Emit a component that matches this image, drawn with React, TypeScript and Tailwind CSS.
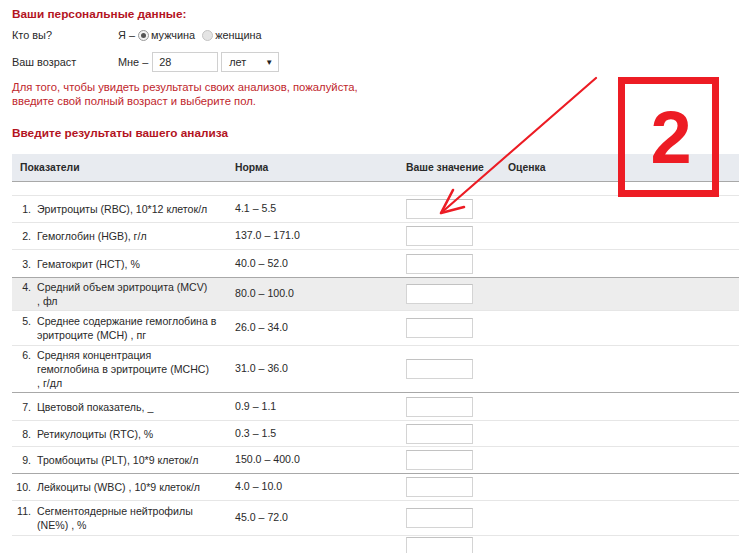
import React from "react";

type Row = {
  n: string;
  lines: string[];
  norm: string;
  h: string;
  dark?: boolean;
  gray?: boolean;
};

const rows: Row[] = [
  { n: "1.", lines: ["Эритроциты (RBC), 10*12 клеток/л"], norm: "4.1 – 5.5", h: "h-[27px]" },
  { n: "2.", lines: ["Гемоглобин (HGB), г/л"], norm: "137.0 – 171.0", h: "h-[27px]" },
  { n: "3.", lines: ["Гематокрит (HCT), %"], norm: "40.0 – 52.0", h: "h-[28px]", dark: true },
  { n: "4.", lines: ["Средний объем эритроцита (MCV)", ", фл"], norm: "80.0 – 100.0", h: "h-[33px]", gray: true },
  { n: "5.", lines: ["Среднее содержание гемоглобина в", "эритроците (MCH) , пг"], norm: "26.0 – 34.0", h: "h-[35px]" },
  {
    n: "6.",
    lines: ["Средняя концентрация", "гемоглобина в эритроците (MCHC)", ", г/дл"],
    norm: "31.0 – 36.0",
    h: "h-[47px]",
    dark: true,
  },
  { n: "7.", lines: ["Цветовой показатель, _"], norm: "0.9 – 1.1", h: "h-[28px]" },
  { n: "8.", lines: ["Ретикулоциты (RTC), %"], norm: "0.3 – 1.5", h: "h-[26px]" },
  { n: "9.", lines: ["Тромбоциты (PLT), 10*9 клеток/л"], norm: "150.0 – 400.0", h: "h-[27px]", dark: true },
  { n: "10.", lines: ["Лейкоциты (WBC) , 10*9 клеток/л"], norm: "4.0 – 10.0", h: "h-[27px]" },
  { n: "11.", lines: ["Сегментоядерные нейтрофилы", "(NE%) , %"], norm: "45.0 – 72.0", h: "h-[35px]" },
];

function Radio({ checked }: { checked?: boolean }) {
  return (
    <span
      className={
        checked
          ? "inline-flex items-center justify-center w-[11px] h-[11px] rounded-full border border-[#9a9a9a] bg-[#f3f3f3]"
          : "inline-flex w-[11px] h-[11px] rounded-full border border-[#c4c4c4] bg-[#e4e4e4]"
      }
    >
      {checked && <span className="w-[5px] h-[5px] rounded-full bg-[#555]" />}
    </span>
  );
}

function ValueBox() {
  return <div className="w-[67px] h-[20px] border border-[#d4d4d4] border-t-[#c2c2c2] bg-white" />;
}

function Annotation() {
  return (
    <svg className="absolute left-0 top-0 pointer-events-none" width="747" height="553" viewBox="0 0 747 553">
      <rect x="621.5" y="80.5" width="94" height="113" fill="none" stroke="#ed1c24" strokeWidth="7" />
      <text
        x="671"
        y="163"
        textAnchor="middle"
        fill="#ed1c24"
        fontFamily="'Liberation Sans', Arial, sans-serif"
        fontWeight="bold"
        fontSize="74"
      >
        2
      </text>
      <path d="M596 78 L441 213" stroke="#ec1c24" strokeWidth="2.2" fill="none" strokeLinecap="round" />
      <path d="M453 190 L441 213 L464 207" stroke="#ec1c24" strokeWidth="2.6" fill="none" strokeLinecap="round" strokeLinejoin="round" />
    </svg>
  );
}

export default function App() {
  return (
    <div className="relative w-[747px] h-[553px] overflow-hidden bg-white font-['Liberation_Sans',Arial,sans-serif] text-[10.6px] text-[#2a2a2a]">
      <div className="pl-3 pt-[6px]">
        <div className="text-[11.8px] leading-[16px] font-bold text-[#b3141f]">Ваши персональные данные:</div>

        <div className="flex items-center h-[16px] mt-[5px] leading-[16px] text-[10.9px]">
          <div className="w-[106px]">Кто вы?</div>
          <span>Я –</span>
          <span className="ml-[3px] mr-[2px] flex">
            <Radio checked />
          </span>
          <span>мужчина</span>
          <span className="ml-[7px] mr-[2px] flex">
            <Radio />
          </span>
          <span>женщина</span>
        </div>

        <div className="flex items-center h-[20px] mt-[9px] text-[10.9px]">
          <div className="w-[106px]">Ваш возраст</div>
          <span>Мне –</span>
          <div className="ml-[4px] w-[66px] h-[20px] border border-[#d0d0d0] flex items-center pl-[6px] pt-[1px]">28</div>
          <div className="ml-[3px] w-[58px] h-[20px] border border-[#d0d0d0] flex items-center justify-between pl-[7px] pr-[5px] pt-[1px]">
            <span>лет</span>
            <span className="text-[8px] text-[#222]">▼</span>
          </div>
        </div>

        <div className="mt-[8px] text-[11.3px] leading-[14px] text-[#c0262d]">
          Для того, чтобы увидеть результаты своих анализов, пожалуйста,
          <br />
          введите свой полный возраст и выберите пол.
        </div>

        <div className="mt-[17px] text-[11.8px] leading-[16px] font-bold text-[#b3141f]">Введите результаты вашего анализа</div>

        <div className="mt-[13px] w-[727px]">
          <div className="flex items-center h-[28px] bg-[#e8ebf0] border-b border-[#a8a8a8] font-bold text-[10.4px]">
            <div className="w-[223px] pl-[8px]">Показатели</div>
            <div className="w-[171px]">Норма</div>
            <div className="w-[102px]">Ваше значение</div>
            <div>Оценка</div>
          </div>
          <div className="h-[14px] border-b border-[#e6e6e6]" />

          {rows.map((r) => (
            <div
              key={r.n}
              className={
                "flex items-center border-b " +
                r.h +
                (r.dark ? " border-[#a8a8a8]" : " border-[#e6e6e6]") +
                (r.gray ? " bg-[#ededed]" : "")
              }
            >
              <div className="w-[223px] flex items-start leading-[14px]">
                <div className="w-[19px] text-right">{r.n}</div>
                <div className="ml-[6px] whitespace-nowrap">
                  {r.lines.map((l, i) => (
                    <div key={i}>{l}</div>
                  ))}
                </div>
              </div>
              <div className="w-[171px]">{r.norm}</div>
              <ValueBox />
            </div>
          ))}

          <div className="flex items-start h-[30px] pt-[1px]">
            <div className="w-[394px]" />
            <ValueBox />
          </div>
        </div>
      </div>
      <Annotation />
    </div>
  );
}
